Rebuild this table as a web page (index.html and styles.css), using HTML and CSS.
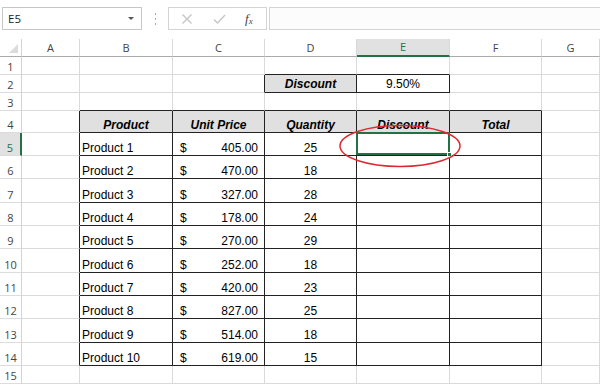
FILE: index.html
```html
<!DOCTYPE html>
<html lang="en">
<head>
    <meta charset="UTF-8">
    <title>Discount sheet</title>
    <link rel="stylesheet" href="styles.css">
</head>
<body>
    <!-- Formula bar -->
    <div class="formula-bar">
        <div class="name-box">
            <span>E5</span>
            <span class="caret"></span>
        </div>
        <div class="grip"><i></i><i></i><i></i></div>
        <div class="fx-buttons">
            <svg class="fx-icon" width="12" height="12" viewBox="0 0 12 12"><path d="M1.5 1.5 L10.5 10.5 M10.5 1.5 L1.5 10.5" stroke="#c4c4c4" stroke-width="1.3" fill="none"/></svg>
            <svg class="fx-icon" width="13" height="12" viewBox="0 0 13 12"><path d="M1 6.5 L4.5 10 L12 2" stroke="#c4c4c4" stroke-width="1.3" fill="none"/></svg>
            <span class="fx-label">f<sub>x</sub></span>
        </div>
        <div class="formula-input"></div>
    </div>

    <!-- Sheet -->
    <div class="sheet">
        <div class="row col-head">
            <div class="corner"><span class="corner-tri"></span></div>
            <div class="ch">A</div>
            <div class="ch">B</div>
            <div class="ch">C</div>
            <div class="ch">D</div>
            <div class="ch active">E</div>
            <div class="ch">F</div>
            <div class="ch">G</div>
        </div>

        <div class="row h18">
            <div class="rh">1</div>
            <div class="c"></div><div class="c"></div><div class="c"></div>
            <div class="c bb"></div><div class="c bb"></div>
            <div class="c"></div><div class="c"></div>
        </div>
        <div class="row h18 low">
            <div class="rh">2</div>
            <div class="c"></div><div class="c"></div><div class="c br"></div>
            <div class="c bb br hd center">Discount</div>
            <div class="c bb br center">9.50%</div>
            <div class="c"></div><div class="c"></div>
        </div>
        <div class="row h18">
            <div class="rh">3</div>
            <div class="c"></div>
            <div class="c bb"></div><div class="c bb"></div><div class="c bb"></div><div class="c bb"></div><div class="c bb"></div>
            <div class="c"></div>
        </div>
        <div class="row h22">
            <div class="rh">4</div>
            <div class="c br"></div>
            <div class="c bb br hd center">Product</div>
            <div class="c bb br hd center">Unit Price</div>
            <div class="c bb br hd center">Quantity</div>
            <div class="c bb br hd center">Discount</div>
            <div class="c bb br hd center">Total</div>
            <div class="c"></div>
        </div>

        <div class="row h23">
            <div class="rh active">5</div>
            <div class="c br"></div>
            <div class="c bb br">Product 1</div>
            <div class="c bb br money"><span>$</span><span>405.00</span></div>
            <div class="c bb br center">25</div>
            <div class="c bb br selected"><span class="sel-box"><span class="sel-handle"></span></span></div>
            <div class="c bb br"></div>
            <div class="c"></div>
        </div>
        <div class="row h23">
            <div class="rh">6</div>
            <div class="c br"></div>
            <div class="c bb br">Product 2</div>
            <div class="c bb br money"><span>$</span><span>470.00</span></div>
            <div class="c bb br center">18</div>
            <div class="c bb br"></div><div class="c bb br"></div>
            <div class="c"></div>
        </div>
        <div class="row h24">
            <div class="rh">7</div>
            <div class="c br"></div>
            <div class="c bb br">Product 3</div>
            <div class="c bb br money"><span>$</span><span>327.00</span></div>
            <div class="c bb br center">28</div>
            <div class="c bb br"></div><div class="c bb br"></div>
            <div class="c"></div>
        </div>
        <div class="row h23">
            <div class="rh">8</div>
            <div class="c br"></div>
            <div class="c bb br">Product 4</div>
            <div class="c bb br money"><span>$</span><span>178.00</span></div>
            <div class="c bb br center">24</div>
            <div class="c bb br"></div><div class="c bb br"></div>
            <div class="c"></div>
        </div>
        <div class="row h23">
            <div class="rh">9</div>
            <div class="c br"></div>
            <div class="c bb br">Product 5</div>
            <div class="c bb br money"><span>$</span><span>270.00</span></div>
            <div class="c bb br center">29</div>
            <div class="c bb br"></div><div class="c bb br"></div>
            <div class="c"></div>
        </div>
        <div class="row h24">
            <div class="rh">10</div>
            <div class="c br"></div>
            <div class="c bb br">Product 6</div>
            <div class="c bb br money"><span>$</span><span>252.00</span></div>
            <div class="c bb br center">18</div>
            <div class="c bb br"></div><div class="c bb br"></div>
            <div class="c"></div>
        </div>
        <div class="row h23">
            <div class="rh">11</div>
            <div class="c br"></div>
            <div class="c bb br">Product 7</div>
            <div class="c bb br money"><span>$</span><span>420.00</span></div>
            <div class="c bb br center">23</div>
            <div class="c bb br"></div><div class="c bb br"></div>
            <div class="c"></div>
        </div>
        <div class="row h23">
            <div class="rh">12</div>
            <div class="c br"></div>
            <div class="c bb br">Product 8</div>
            <div class="c bb br money"><span>$</span><span>827.00</span></div>
            <div class="c bb br center">25</div>
            <div class="c bb br"></div><div class="c bb br"></div>
            <div class="c"></div>
        </div>
        <div class="row h24">
            <div class="rh">13</div>
            <div class="c br"></div>
            <div class="c bb br">Product 9</div>
            <div class="c bb br money"><span>$</span><span>514.00</span></div>
            <div class="c bb br center">18</div>
            <div class="c bb br"></div><div class="c bb br"></div>
            <div class="c"></div>
        </div>
        <div class="row h23">
            <div class="rh">14</div>
            <div class="c br"></div>
            <div class="c bb br">Product 10</div>
            <div class="c bb br money"><span>$</span><span>619.00</span></div>
            <div class="c bb br center">15</div>
            <div class="c bb br"></div><div class="c bb br"></div>
            <div class="c"></div>
        </div>
        <div class="row h18">
            <div class="rh">15</div>
            <div class="c"></div><div class="c"></div><div class="c"></div><div class="c"></div>
            <div class="c"></div><div class="c"></div><div class="c"></div>
        </div>

        <!-- red annotation ring -->
        <svg class="ring" width="130" height="50" viewBox="0 0 130 50">
            <ellipse cx="65" cy="25" rx="60" ry="20.5" fill="none" stroke="#e0282e" stroke-width="1.5"/>
        </svg>
    </div>
</body>
</html>
```

FILE: styles.css
```css
* {
    margin: 0;
    padding: 0;
    box-sizing: border-box;
}

body {
    font-family: 'Liberation Sans', Arial, sans-serif;
    background: white;
    width: 600px;
    height: 385px;
    overflow: hidden;
}

/* Formula bar */

.formula-bar {
    height: 39px;
    display: flex;
    align-items: flex-start;
    padding-top: 7px;
    padding-left: 2px;
}

.name-box {
    width: 140px;
    height: 23px;
    border: 1px solid #c6c6c6;
    display: flex;
    align-items: center;
    justify-content: space-between;
    padding: 0 7px 0 5px;
    font-family: 'Open Sans', sans-serif;
    font-size: 11.5px;
    color: #222;
}

.caret {
    width: 0;
    height: 0;
    border-left: 3px solid transparent;
    border-right: 3px solid transparent;
    border-top: 3px solid #555;
}

.grip {
    width: 26px;
    height: 23px;
    display: flex;
    flex-direction: column;
    align-items: center;
    justify-content: center;
    gap: 3px;
}

.grip i {
    width: 1px;
    height: 2px;
    background: #a8a8a8;
}

.fx-buttons {
    width: 99px;
    height: 23px;
    border: 1px solid #d4d4d4;
    display: flex;
    align-items: center;
    padding-left: 12px;
    gap: 20px;
}

.fx-label {
    font-family: 'Liberation Serif', serif;
    font-style: italic;
    font-size: 13px;
    color: #444;
    margin-left: -1px;
}

.fx-label sub {
    font-size: 9px;
    vertical-align: -1px;
}

.formula-input {
    flex: 1;
    height: 23px;
    margin-left: 2px;
    border: 1px solid #d4d4d4;
    border-right: none;
    background: #fcfcfc;
}

/* Sheet grid */

.sheet {
    position: relative;
}

.row {
    display: grid;
    grid-template-columns: 22px 58px 93px 92px 92px 93px 92px 58px;
}

.h18 { height: 18px; }
.h22 { height: 22px; }
.h23 { height: 23px; }
.h24 { height: 24px; }

.col-head {
    height: 18px;
}

.corner {
    border-right: 1px solid #d4d4d4;
    border-bottom: 1px solid #ababab;
    position: relative;
}

.corner-tri {
    position: absolute;
    right: 3px;
    bottom: 3px;
    width: 0;
    height: 0;
    border-left: 9px solid transparent;
    border-bottom: 9px solid #dcdcdc;
}

.ch {
    border-right: 1px solid #d9d9d9;
    border-bottom: 1px solid #ababab;
    text-align: center;
    font-family: 'Open Sans', sans-serif;
    font-size: 11px;
    line-height: 17px;
    color: #444;
}

.ch.active {
    background: #e1e1e1;
    border-bottom: 2px solid #217346;
    color: #217346;
    line-height: 16px;
}

.rh {
    border-right: 1px solid #d4d4d4;
    border-bottom: 1px solid #dcdcdc;
    display: flex;
    align-items: flex-end;
    justify-content: center;
    font-family: 'Open Sans', sans-serif;
    font-size: 11px;
    line-height: 14px;
    color: #444;
}

.rh.active {
    border-right: 2px solid #217346;
    color: #217346;
    background: #e1e1e1;
}

.c {
    border-right: 1px solid #dadada;
    border-bottom: 1px solid #dadada;
    display: flex;
    align-items: flex-end;
    padding: 0 2px;
    font-size: 12px;
    line-height: 14px;
    color: #000;
    white-space: nowrap;
}

.low .c {
    padding-bottom: 1px;
}

.bb { border-bottom-color: #222; }
.br { border-right-color: #222; }

.center {
    justify-content: center;
}

.hd {
    background: #e0e0e0;
    font-weight: bold;
    font-style: italic;
}

.money {
    justify-content: space-between;
    padding: 0 6px 0 7px;
}

.selected {
    position: relative;
}

.sel-box {
    position: absolute;
    top: -1px;
    left: -1px;
    right: -1px;
    bottom: 0;
    border: 2px solid #217346;
}

.sel-handle {
    position: absolute;
    right: -4px;
    bottom: -4px;
    width: 5px;
    height: 5px;
    background: #217346;
    border: 1px solid white;
}

.ring {
    position: absolute;
    left: 335px;
    top: 82px;
}
```
